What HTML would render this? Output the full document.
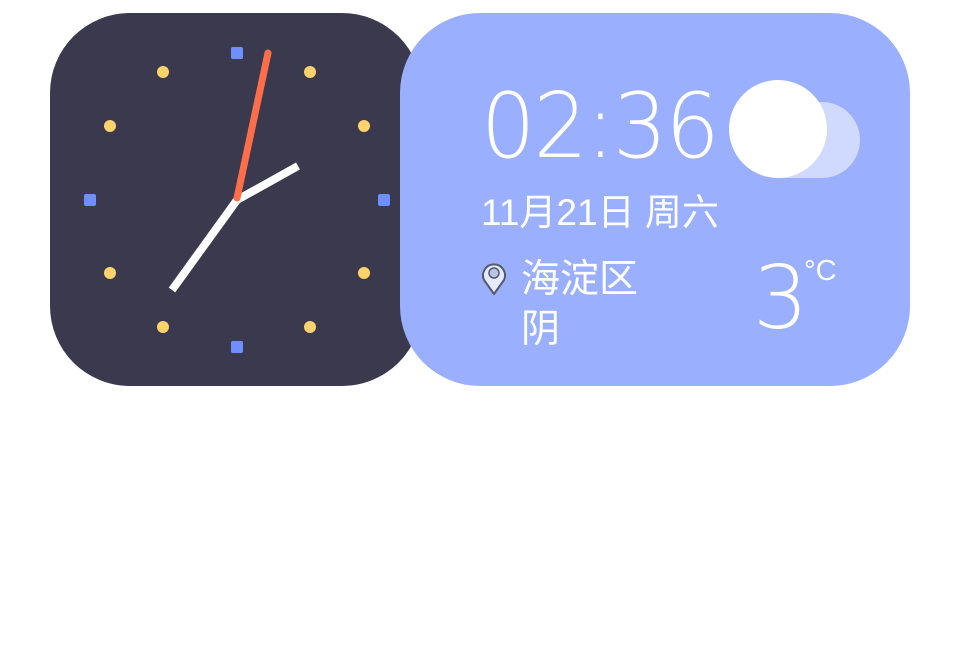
<!DOCTYPE html>
<html><head><meta charset="utf-8"><style>
body{margin:0;width:960px;height:664px;background:#fff;position:relative;overflow:hidden;font-family:"Liberation Sans","Noto Sans CJK SC",sans-serif}
.t{position:absolute;color:#fff;white-space:nowrap;line-height:1}
.thin{font-family:"DejaVu Sans","Liberation Sans",sans-serif;font-weight:200}
</style></head><body>
<svg width="960" height="664" style="position:absolute;left:0;top:0">
<rect x="50" y="13" width="372" height="373" rx="80" fill="#3b394d"/>
<g fill="#6f8ffd">
<rect x="231" y="47" width="12" height="12" rx="2"/>
<rect x="231" y="341" width="12" height="12" rx="2"/>
<rect x="84" y="194" width="12" height="12" rx="2"/>
<rect x="378" y="194" width="12" height="12" rx="2"/>
</g>
<g fill="#ffd36b">
<circle cx="163" cy="72" r="6"/><circle cx="310" cy="72" r="6"/>
<circle cx="110" cy="126" r="6"/><circle cx="364" cy="126" r="6"/>
<circle cx="110" cy="273" r="6"/><circle cx="364" cy="273" r="6"/>
<circle cx="163" cy="327" r="6"/><circle cx="310" cy="327" r="6"/>
</g>
<line x1="237" y1="200" x2="298" y2="166" stroke="#fff" stroke-width="8"/>
<line x1="237" y1="200" x2="172" y2="290" stroke="#fff" stroke-width="8"/>
<line x1="237" y1="198" x2="268" y2="53" stroke="#ff6e4a" stroke-width="7" stroke-linecap="round"/>
<rect x="400" y="13" width="510" height="373" rx="80" fill="#9aaffe"/>
<circle cx="822" cy="140" r="38" fill="#d0d9fe"/>
<rect x="778" y="140" width="44" height="38" fill="#d0d9fe"/>
<circle cx="778" cy="129" r="49" fill="#fff"/>
<path d="M494 294 L484 280 A11 11 0 1 1 504 280 Z" fill="#e4eaff" stroke="#555a6e" stroke-width="2" stroke-linejoin="round"/>
<circle cx="494" cy="273" r="5" fill="#b7c6e8" stroke="#555a6e" stroke-width="1.5"/>
</svg>
<div class="t thin" style="left:481px;top:82px;font-size:90px;letter-spacing:-2px;transform:scaleX(0.95);transform-origin:left">02:36</div>
<div class="t" style="left:481px;top:194px;font-size:37px">11月21日 周六</div>
<div class="t" style="left:521px;top:260px;font-size:39px">海淀区</div>
<div class="t" style="left:521px;top:310px;font-size:39px">阴</div>
<div class="t thin" style="left:753px;top:255px;font-size:87px">3</div>
<div class="t" style="left:804px;top:257px;font-size:29px">°C</div>
</body></html>
